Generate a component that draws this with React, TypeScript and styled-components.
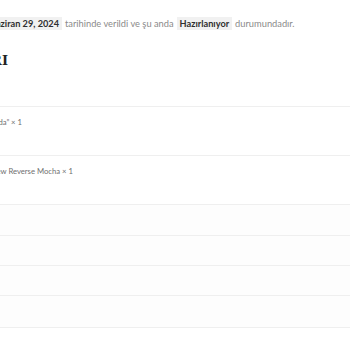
import styled, { createGlobalStyle } from "styled-components";

const GlobalStyle = createGlobalStyle`
  html, body {
    margin: 0;
    padding: 0;
    background: #ffffff;
  }
  body {
    font-family: Lato, "Open Sans", sans-serif;
  }
`;

const Page = styled.div`
  width: 350px;
  height: 350px;
  overflow: hidden;
  background: #ffffff;
`;

const Notice = styled.p`
  margin: 17px 0 0 -17px;
  font-size: 9.3px;
  line-height: 14px;
  color: #8a8a8a;
  white-space: nowrap;
`;

const Mark = styled.mark`
  background: #f1f1f1;
  color: #2f2f2f;
  font-weight: 700;
  font-size: 9.2px;
  padding: 1px 3px;
  margin: 0 3px;
`;

const CutLeft = styled.div<{ $end: number }>`
  display: flex;
  justify-content: flex-end;
  width: ${({ $end }) => $end}px;
  white-space: nowrap;
`;

const Heading = styled.h2`
  margin: 22px 0 0;
  font-family: "DejaVu Serif", "Liberation Serif", serif;
  font-weight: 700;
  font-size: 13px;
  line-height: 16px;
  color: #222222;
`;

const Table = styled.div`
  margin-top: 37px;
  display: flex;
  flex-direction: column;
  border-bottom: 1px solid #efefef;
`;

const ItemRow = styled.div`
  border-top: 1px solid #efefef;
  padding-top: 10px;
  box-sizing: border-box;
  height: 49px;
`;

const ItemName = styled.span`
  font-size: 7.7px;
  line-height: 10px;
  color: #6f6f6f;
`;

const TotalRow = styled.div<{ $h: number }>`
  height: ${({ $h }) => $h}px;
  border-top: 1px solid #efefef;
  background: #fdfdfd;
`;

const items = [
  { name: "Kahve \u201CKolombiya Medellín Ayda\u201D \u00D7 1", end: 22 },
  { name: "Cold Brew Reverse Mocha \u00D7 1", end: 73 },
];

const totals = [30, 29, 29, 31];

export default function App() {
  return (
    <Page>
      <GlobalStyle />
      <Notice>
        <Mark>Haziran 29, 2024</Mark>
        tarihinde verildi ve şu anda
        <Mark>Hazırlanıyor</Mark>
        durumundadır.
      </Notice>
      <CutLeft $end={8}>
        <Heading>SİPARİŞ DETAYLARI</Heading>
      </CutLeft>
      <Table>
        {items.map((item) => (
          <ItemRow key={item.name}>
            <CutLeft $end={item.end}>
              <ItemName>{item.name}</ItemName>
            </CutLeft>
          </ItemRow>
        ))}
        {totals.map((h, i) => (
          <TotalRow key={i} $h={h} />
        ))}
      </Table>
    </Page>
  );
}
